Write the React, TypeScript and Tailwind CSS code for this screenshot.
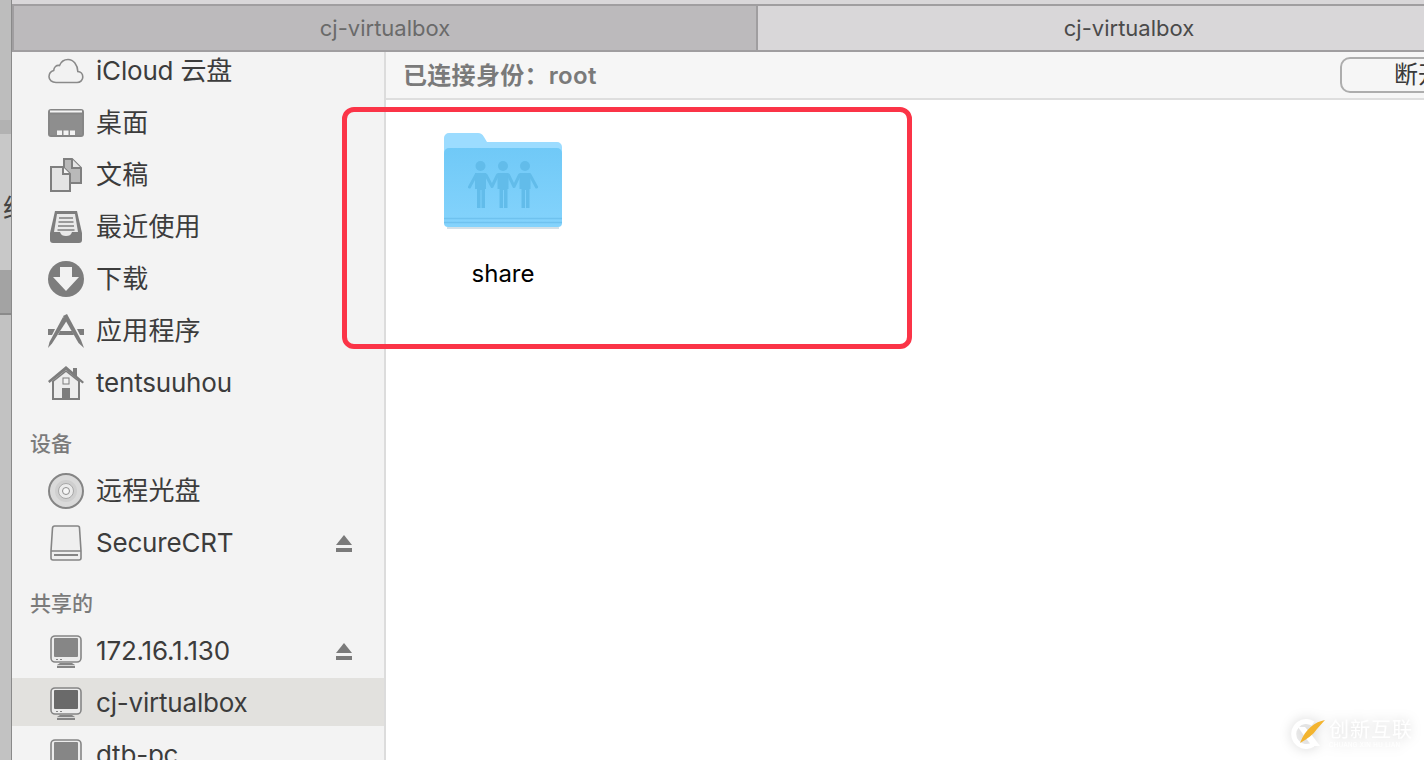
import type { ReactNode } from 'react';

const cjk = "font-['Inter','Noto_Sans_CJK_SC',sans-serif]";

const CloudIcon = () => (
  <svg width="36" height="26" viewBox="0 0 36 26" fill="#f2f2f2" stroke="#8a8a8a" strokeWidth="1.6">
    <path d="M8 24.5h21c3.5 0 5.8-2.6 5.8-5.6 0-3-2.2-5.2-5-5.4C29.6 7 25.5 1.5 20 1.5c-4 0-7 2.4-8.5 6-3.2-.6-5.6 1.6-5.8 5C3 13.3 1 16 1 18.8c0 3.2 3 5.7 7 5.7z" />
  </svg>
);

const DesktopIcon = () => (
  <svg width="36" height="28" viewBox="0 0 36 28">
    <rect x="0" y="0" width="36" height="28" rx="3" fill="#868686" />
    <rect x="2" y="1.5" width="32" height="2" fill="#f4f4f4" />
    <rect x="2" y="5.5" width="32" height="20.5" fill="#8e8e8e" />
    <rect x="9" y="21.5" width="5" height="4.5" fill="#f4f4f4" />
    <rect x="15.5" y="21.5" width="5" height="4.5" fill="#f4f4f4" />
    <rect x="22" y="21.5" width="5" height="4.5" fill="#f4f4f4" />
  </svg>
);

const DocsIcon = () => (
  <svg width="32" height="34" viewBox="0 0 32 34" stroke="#7f7f7f" strokeWidth="2">
    <path d="M14 1h8l9 9v15H14z" fill="#b9b9b9" />
    <path d="M22 1v9h9" fill="#e6e6e6" />
    <path d="M1 9h12l7 7v17H1z" fill="#e4e4e4" />
    <path d="M13 9v7h7" fill="#f4f4f4" />
  </svg>
);

const RecentIcon = () => (
  <svg width="32" height="32" viewBox="0 0 32 32">
    <path d="M5 0h22l5 22v7a3 3 0 0 1-3 3H3a3 3 0 0 1-3-3v-7z" fill="#7d7d7d" />
    <path d="M7 3h18l3 18h-6c-1 3-3 4-6 4s-5-1-6-4H4z" fill="#e9e9e9" />
    <path d="M9 7h14M8.5 11h15M8 15h16M7.5 19h17" stroke="#808080" strokeWidth="1.5" />
  </svg>
);

const DownloadIcon = () => (
  <svg width="36" height="36" viewBox="0 0 36 36">
    <circle cx="18" cy="18" r="18" fill="#7d7d7d" />
    <path d="M12 6h12v10h7L18 30 5 16h7z" fill="#f2f2f2" />
  </svg>
);

const AppsIcon = () => (
  <svg width="36" height="34" viewBox="0 0 36 34" fill="#7d7d7d">
    <path d="M0 15h7l-3 6H0zM29 15h7v6h-4zM12 17h12l2 4H10z" />
    <path d="M15 3l4.500 2.500L4 29.500 0 34l1.500-6z" />
    <path d="M15 2l4-2 14 26 3 8-5.500-5z" />
  </svg>
);

const HomeIcon = () => (
  <svg width="36" height="34" viewBox="0 0 36 34">
    <path d="M0 15L18 0l7 6V2h4v8l7 6-1.5 1.5L18 4 1.5 17z" fill="#7d7d7d" />
    <path d="M4 15L18 4l14 11v19H4z" fill="#7d7d7d" />
    <path d="M6 15.500L18 6l12 9.500V32H6z" fill="#ededed" />
    <rect x="15" y="12" width="6" height="6" fill="#f2f2f2" stroke="#7d7d7d" strokeWidth="1" />
    <rect x="14" y="22" width="8" height="12" fill="#7d7d7d" />
  </svg>
);

const DiscIcon = () => (
  <svg width="36" height="36" viewBox="0 0 36 36">
    <circle cx="18" cy="18" r="17" fill="#dadada" stroke="#858585" strokeWidth="2" />
    <circle cx="18" cy="18" r="11" fill="#cfcfcf" />
    <circle cx="18" cy="18" r="7.5" fill="#ececec" stroke="#a8a8a8" strokeWidth="1" />
    <circle cx="18" cy="18" r="3.5" fill="#f7f7f7" stroke="#8e8e8e" strokeWidth="1" />
  </svg>
);

const DriveIcon = () => (
  <svg width="32" height="36" viewBox="0 0 32 36">
    <path d="M4.500 1h23a2 2 0 0 1 2 2L31 26v7a2 2 0 0 1-2 2H3a2 2 0 0 1-2-2v-7L2.500 3a2 2 0 0 1 2-2z" fill="#efefef" stroke="#858585" strokeWidth="1.6" />
    <path d="M1 26h30" stroke="#858585" strokeWidth="1.5" />
    <path d="M4 30h24" stroke="#858585" strokeWidth="2" />
  </svg>
);

const MonitorIcon = ({ screen = '#868686' }: { screen?: string }) => (
  <svg width="32" height="33" viewBox="0 0 32 33">
    <rect x="1" y="1" width="30" height="26" rx="4" fill="#ececec" stroke="#858585" strokeWidth="1.6" />
    <rect x="4" y="3" width="24" height="19" rx="1" fill={screen} />
    <path d="M6 24.500h2M10 24.500h2" stroke="#858585" strokeWidth="1.2" />
    <path d="M10 28h12l3 2v3H7v-3z" fill="#858585" />
    <rect x="7" y="30" width="18" height="1" fill="#d4d4d4" />
  </svg>
);

const EjectIcon = () => (
  <svg width="16" height="17" viewBox="0 0 16 17" fill="#7a7a7a">
    <path d="M8 0l8 10H0z" />
    <rect x="0" y="13" width="16" height="4" />
  </svg>
);

function SidebarRow({
  icon,
  label,
  eject,
  selected,
}: {
  icon: ReactNode;
  label: string;
  eject?: boolean;
  selected?: boolean;
}) {
  const latin = /[a-z0-9]/i.test(label);
  return (
    <div className={`flex shrink-0 items-center pr-[32px] ${selected ? 'mt-[1px] mb-[3px] h-[48px] bg-[#e2e1de] pt-[2px]' : 'h-[52px]'}`}>
      <div className="flex w-[84px] shrink-0 justify-center pl-[27px] pr-[3px]">{icon}</div>
      <span className={`${cjk} flex-1 text-[26px] leading-[34px] text-[#3c3c3c] ${latin ? 'tracking-[-0.2px]' : 'tracking-[0.2px]'}`}>
        {label}
      </span>
      {eject && <EjectIcon />}
    </div>
  );
}

function SectionLabel({ label }: { label: string }) {
  return (
    <div className={`${cjk} flex h-[56px] shrink-0 items-end pb-[7px] pl-[18px] text-[21px] font-medium leading-[28px] text-[#7b7b7b]`}>
      {label}
    </div>
  );
}

// the share folder with the three people on it
const SharedFolder = () => (
  <svg width="120" height="98" viewBox="0 0 120 98" className="overflow-visible">
    <defs>
      <linearGradient id="folderFront" x1="0" y1="0" x2="0" y2="1">
        <stop offset="0" stopColor="#70c9f7" />
        <stop offset="1" stopColor="#84d3fc" />
      </linearGradient>
    </defs>
    <path d="M1 6a5 5 0 0 1 5-5h29c3 0 4 1 6 4l3 5h70a5 5 0 0 1 5 5v20H1z" fill="#9cdcff" />
    <path d="M1 21a5 5 0 0 1 5-5h108a5 5 0 0 1 5 5v70a4 4 0 0 1-4 4H5a4 4 0 0 1-4-4z" fill="url(#folderFront)" />
    <path d="M1 86.500h118M1 90.500h118" stroke="#6fc2ef" strokeWidth="1.5" />
    <path d="M4 96h112" stroke="#c4d6df" strokeWidth="1.5" />
    <g fill="#62bcea" stroke="none">
      <circle cx="37.500" cy="34" r="5" />
      <circle cx="60" cy="34" r="5" />
      <circle cx="82" cy="34" r="5" />
      <path d="M32 41h11v16h-1v19h-3.500V58h-1v18H34V57h-2zM54.500 41h11v16h-1v19H61V58h-1v18h-3.500V57h-2zM76.500 41h11v16h-1v19H83V58h-1v18h-3.500V57h-2z" />
    </g>
    <path d="M33 43l-6.500 12M43 43l6 11.500 5.500-11.500M65.500 43l5.500 11.500 5.500-11.500M87 43l6.500 12" fill="none" stroke="#62bcea" strokeWidth="3" strokeLinecap="round" strokeLinejoin="round" />
  </svg>
);

const WatermarkLogo = () => (
  <svg width="36" height="30" viewBox="0 0 36 30">
    <path d="M24 4.500A12.500 12.500 0 1 0 24 25.500" fill="none" stroke="#fff" strokeWidth="5" />
    <path d="M9 8l7 0 6 7 9 12h-8l-7-9z" fill="#fff" />
    <path d="M36 1C26 3 17 9 11 24c7-4 13-8 17-14z" fill="#f3b42f" />
  </svg>
);

export default function App() {
  return (
    <div className={`${cjk} relative flex h-[760px] w-[1424px] overflow-hidden bg-[#d4d4d4]`}>
      {/* strip of the window behind, left of the finder window */}
      <div className="flex w-[12px] shrink-0 flex-col border-r border-[#8a8a8a] bg-[#c2c2c2]">
        <div className="h-[120px] bg-[#bdbdbd]" />
        <div className="h-[14px] bg-[#b2b2b2]" />
        <div className="h-[136px] bg-[#c8c8c8]" />
        <div className="h-[43px] bg-[#a3a3a3]" />
        <div className="h-[2px] bg-[#8a8a8a]" />
        <div className="flex-1 bg-[#c2c2c2]" />
      </div>

      <div className="flex min-w-0 flex-1 flex-col">
        <div className="h-[4px] shrink-0 bg-[#d9d7d9]" />
        {/* tab bar */}
        <div className="flex h-[48px] shrink-0 border-y-2 border-l-2 border-[#a09ea0]">
          <div className="flex w-[744px] shrink-0 items-center justify-center border-r-2 border-[#a09ea0] bg-[#bcbabc] text-[22px] text-[#6a6a6a]">
            cj-virtualbox
          </div>
          <div className="flex w-[742px] shrink-0 items-center justify-center bg-[#d9d7d9] text-[22px] text-[#4a4a4a]">
            cj-virtualbox
          </div>
        </div>

        <div className="flex min-h-0 flex-1">
          {/* sidebar */}
          <div className="flex w-[374px] shrink-0 flex-col overflow-hidden border-r-2 border-[#dcdcdc] bg-[#f3f3f3]">
            <div className="-mt-[7px] flex flex-col">
              <SidebarRow icon={<CloudIcon />} label="iCloud 云盘" />
              <SidebarRow icon={<DesktopIcon />} label="桌面" />
              <SidebarRow icon={<DocsIcon />} label="文稿" />
              <SidebarRow icon={<RecentIcon />} label="最近使用" />
              <SidebarRow icon={<DownloadIcon />} label="下载" />
              <SidebarRow icon={<AppsIcon />} label="应用程序" />
              <SidebarRow icon={<HomeIcon />} label="tentsuuhou" />
              <SectionLabel label="设备" />
              <SidebarRow icon={<DiscIcon />} label="远程光盘" />
              <SidebarRow icon={<DriveIcon />} label="SecureCRT" eject />
              <SectionLabel label="共享的" />
              <SidebarRow icon={<MonitorIcon />} label="172.16.1.130" eject />
              <SidebarRow icon={<MonitorIcon screen="#6a6a6a" />} label="cj-virtualbox" selected />
              <SidebarRow icon={<MonitorIcon />} label="dtb-pc" />
            </div>
          </div>

          {/* content */}
          <div className="flex min-w-0 flex-1 flex-col bg-white">
            <div className="flex h-[48px] shrink-0 items-center justify-between border-b-2 border-[#dedede] bg-[#f6f6f6] pl-[17px]">
              <span className="pt-[1px] text-[24px] font-semibold tracking-[0.3px] text-[#7a7a7a]">已连接身份：root</span>
              <div className="-mr-[40px] flex h-[36px] w-[124px] items-center rounded-[10px] border-2 border-[#adadad] bg-[#f6f6f6] pl-[52px] text-[24px] whitespace-nowrap text-[#3a3a3a]">
                断开
              </div>
            </div>
            <div className="ml-[57px] flex w-[120px] flex-col items-center pt-[32px]">
              <SharedFolder />
              <span className="mt-[30px] text-[24px] leading-[28px] text-black">share</span>
            </div>
          </div>
        </div>
      </div>

      {/* red annotation drawn over the shot */}
      <div className="absolute top-[107px] left-[342px] h-[242px] w-[570px] rounded-[12px] border-[5px] border-[#fb3447]" />

      {/* stray glyph from the window behind */}
      <span className="absolute top-[192px] left-[3px] w-[8px] overflow-hidden text-[26px] leading-[34px] text-[#444]">
        统
      </span>

      {/* watermark */}
      <div className="absolute top-[719px] left-[1289px] flex items-center gap-[4px] [filter:drop-shadow(0_0_6px_rgba(0,0,0,0.18))]">
        <WatermarkLogo />
        <div className="flex flex-col text-white">
          <span className="text-[20px] leading-[21px] tracking-[1px]">创新互联</span>
          <span className="text-[6px] leading-[7px] tracking-[0.4px] whitespace-nowrap">CHUANG XIN HU LIAN</span>
        </div>
      </div>
    </div>
  );
}
